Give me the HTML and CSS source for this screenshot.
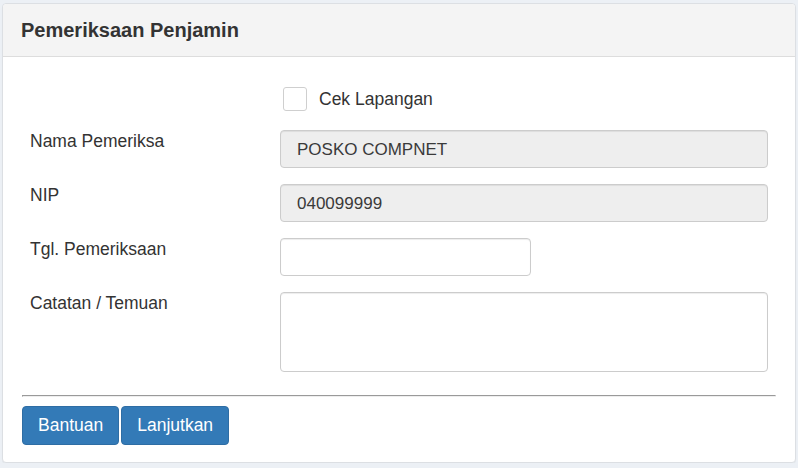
FILE: index.html
```html
<!DOCTYPE html>
<html lang="id">
<head>
<meta charset="utf-8">
<title>Pemeriksaan Penjamin</title>
<link rel="stylesheet" href="styles.css">
</head>
<body>
<div class="panel">
  <div class="panel-heading">
    <h3 class="panel-title">Pemeriksaan Penjamin</h3>
  </div>
  <div class="panel-body">
    <form class="form">
      <div class="row row-check">
        <span></span>
        <label class="check"><input type="checkbox" class="checkbox"><span>Cek Lapangan</span></label>
      </div>
      <div class="row">
        <label class="label">Nama Pemeriksa</label>
        <input class="control readonly" type="text" value="POSKO COMPNET" readonly>
      </div>
      <div class="row">
        <label class="label">NIP</label>
        <input class="control readonly" type="text" value="040099999" readonly>
      </div>
      <div class="row">
        <label class="label">Tgl. Pemeriksaan</label>
        <input class="control short" type="text" value="">
      </div>
      <div class="row">
        <label class="label">Catatan / Temuan</label>
        <textarea class="control area"></textarea>
      </div>
    </form>
    <hr class="divider">
    <div class="actions">
      <button class="btn" type="button">Bantuan</button>
      <button class="btn" type="button">Lanjutkan</button>
    </div>
  </div>
</div>
</body>
</html>
```

FILE: styles.css
```css
html, body {
  margin: 0;
  padding: 0;
}
body {
  background: #ecf0f5;
  font-family: "Liberation Sans", Arial, sans-serif;
  color: #333;
  padding: 3px 2px 0 2px;
}
.panel {
  background: #fff;
  border: 1px solid #dcdfe3;
  border-radius: 4px;
  box-shadow: 0 1px 1px rgba(0, 0, 0, 0.04);
}
.panel-heading {
  background: #f4f4f4;
  border-bottom: 1px solid #dddddd;
  border-radius: 4px 4px 0 0;
  padding: 15px 18px 14px 18px;
}
.panel-title {
  margin: 0;
  font-size: 20px;
  line-height: 23px;
  font-weight: bold;
  color: #333;
}
.panel-body {
  padding: 30px 19px 17px 19px;
}
.form {
  display: flex;
  flex-direction: column;
  gap: 16px;
  padding: 0 8px;
}
.row {
  display: grid;
  grid-template-columns: 250px 1fr;
  align-items: start;
}
.row-check {
  margin-bottom: 3px;
}
.check {
  display: flex;
  align-items: center;
  gap: 12px;
  padding-left: 3px;
  font-size: 17.5px;
  line-height: 24px;
  color: #333;
}
.checkbox {
  appearance: none;
  -webkit-appearance: none;
  margin: 0;
  width: 24px;
  height: 24px;
  border: 1px solid #cfcfcf;
  border-radius: 3px;
  background: #fff;
}
.label {
  font-size: 17.5px;
  line-height: 23px;
  color: #333;
}
.control {
  box-sizing: border-box;
  height: 38px;
  width: 100%;
  margin: 0;
  border: 1px solid #cccccc;
  border-radius: 4px;
  padding: 1px 15px 0 16px;
  font-family: "Liberation Sans", Arial, sans-serif;
  font-size: 17px;
  color: #3a3a3a;
  background: #fff;
  box-shadow: inset 0 1px 1px rgba(0, 0, 0, 0.075);
  outline: none;
}
.readonly {
  background: #eeeeee;
}
.short {
  width: 251px;
}
.area {
  height: 80px;
  resize: none;
  display: block;
  padding: 8px 15px;
}
.divider {
  height: 0;
  margin: 23px 0 9px 0;
  border-top: 1px solid #9a9a9a;
  border-left: 1px solid #9a9a9a;
  border-bottom: 1px solid #eeeeee;
  border-right: 1px solid #eeeeee;
}
.actions {
  display: flex;
  gap: 2px;
}
.btn {
  height: 39px;
  padding: 0 15px;
  background: #337ab7;
  border: 1px solid #2e6da4;
  border-radius: 4px;
  color: #fff;
  font-family: "Liberation Sans", Arial, sans-serif;
  font-size: 17.5px;
  line-height: 1;
  margin: 0;
}
```
